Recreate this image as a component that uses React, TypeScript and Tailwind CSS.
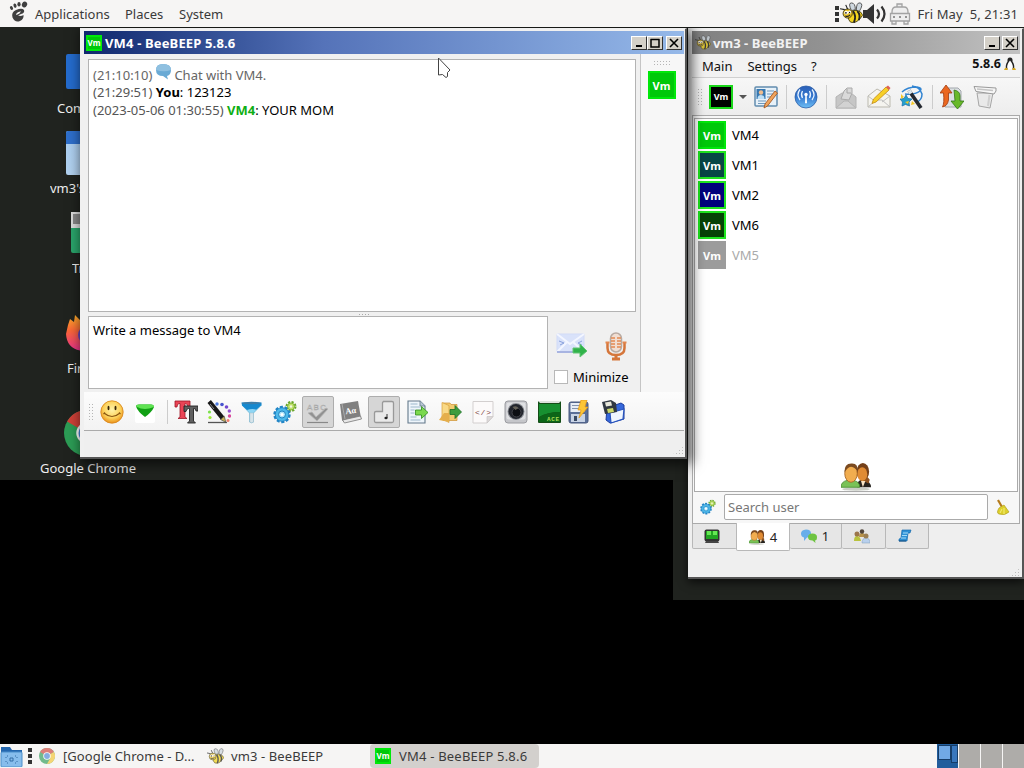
import type { ReactNode } from "react"
import { clsx } from "clsx"

function Svg({ size = 24, children, className }: { size?: number; children: ReactNode; className?: string }) {
  return (
    <svg width={size} height={size} viewBox="0 0 24 24" fill="none" className={clsx("shrink-0", className)}>
      {children}
    </svg>
  )
}

/* ---------- shared icons ---------- */

function Bee({ size = 24, faded }: { size?: number; faded?: boolean }) {
  return (
    <Svg size={size} className={faded ? "opacity-75" : undefined}>
      <path d="M12 9Q8 1 12 1t4 7zM17 9q0-9 4-8t-1 9z" fill="#cfd8df" stroke="#444" strokeWidth=".9" />
      <path d="M11 10q6-3 11 1 3 3 0 5-5 7-11 5-5-5 0-11z" fill="#f4d51e" stroke="#3b3410" strokeWidth=".9" />
      <path d="M13.500 9.500q4 5 1 12M18 9.500q4 4 1.500 9.500" stroke="#222" strokeWidth="2" />
      <circle cx="8" cy="12" r="4.800" fill="#e9c224" stroke="#3b3410" strokeWidth=".9" />
      <circle cx="6.500" cy="11" r="2" fill="#fff" />
      <circle cx="10" cy="10.500" r="1.600" fill="#fff" />
      <circle cx="6.200" cy="11.300" r=".9" fill="#111" />
      <circle cx="10" cy="11" r=".7" fill="#111" />
      <path d="M5 8L0 7M8 7.500L6 3M5.500 14.500q3 1.500 5-1" stroke="#222" strokeWidth="1.200" />
    </Svg>
  )
}

function Gears({ size = 24 }: { size?: number }) {
  return (
    <Svg size={size}>
      <circle cx="18" cy="6.500" r="4.200" stroke="#6aa62c" strokeWidth="2.600" strokeDasharray="2 1.300" />
      <circle cx="18" cy="6.500" r="3.500" fill="#c0df6e" stroke="#83b834" />
      <circle cx="18" cy="6.500" r="1.200" fill="#f4f8e6" />
      <circle cx="9" cy="14.500" r="7.500" stroke="#2285c6" strokeWidth="2.400" strokeDasharray="3 1.712" />
      <circle cx="9" cy="14.500" r="6.800" fill="#4cb9ea" stroke="#2285c6" />
      <circle cx="9" cy="14.500" r="3.500" fill="#a9e1f8" stroke="#2285c2" />
      <circle cx="9" cy="14.500" r="1.600" fill="#fff" />
    </Svg>
  )
}

function People({ size = 24 }: { size?: number }) {
  return (
    <Svg size={size}>
      <ellipse cx="12" cy="22.500" rx="11" ry="1.300" fill="#c9cdc5" />
      <path d="M13 20q0-5 4.500-5.500Q24 16 24 21H13z" fill="#26231e" />
      <ellipse cx="17.500" cy="8.500" rx="5" ry="7" fill="#744019" />
      <path d="M18 9l5 6-1 3-4-2z" fill="#8d521f" />
      <ellipse cx="17" cy="10.500" rx="4" ry="5.500" fill="#e08b33" />
      <path d="M16 16l1.500 5 2-5z" fill="#fae5c5" />
      <path d="M0 21q0-4.500 5-5.500h5q5 1 5 5.500z" fill="#79c257" stroke="#468b2f" strokeWidth=".7" />
      <ellipse cx="8" cy="10" rx="5" ry="7" fill="#f1ad4f" stroke="#a56322" strokeWidth=".7" />
      <path d="M2.800 9Q2.500 1.500 9 2q5 0 4 6-1.500-3-5-3.500-3 .5-5.200 4.500z" fill="#7b4a20" />
    </Svg>
  )
}

function Chrome({ size = 24 }: { size?: number }) {
  return (
    <Svg size={size}>
      <circle cx="12" cy="12" r="12" fill="#2c9c55" />
      <path d="M12 12L1.600 6A12 12 0 0122.400 6z" fill="#cf4038" />
      <path d="M12 12L22.400 6A12 12 0 0112 24l5-9z" fill="#f5c431" />
      <circle cx="12" cy="12" r="5.600" fill="#fff" />
      <circle cx="12" cy="12" r="4.400" fill="#4a86d8" />
    </Svg>
  )
}

function Avatar({ className }: { className: string }) {
  return (
    <span className={clsx("flex shrink-0 items-center justify-center border-2 font-bold leading-none text-white", className)}>
      Vm
    </span>
  )
}

/* ---------- toolbar icons ---------- */

const Smiley = () => (
  <Svg>
    <defs>
      <radialGradient id="smile" cx=".5" cy=".4" r=".62">
        <stop offset="0" stopColor="#fff3ab" />
        <stop offset=".6" stopColor="#fdd35c" />
        <stop offset="1" stopColor="#e88a13" />
      </radialGradient>
    </defs>
    <circle cx="12" cy="12" r="11.200" fill="url(#smile)" stroke="#d8861b" strokeWidth=".8" />
    <ellipse cx="8.500" cy="8" rx="1" ry="2.200" fill="#3a2505" />
    <ellipse cx="15.500" cy="8" rx="1" ry="2.200" fill="#3a2505" />
    <path d="M4 13q8 7 16 0M3.500 14l1.500-1.500M20.500 14L19 12.500" stroke="#8a5510" strokeWidth="1.100" />
  </Svg>
)

const GreenGem = () => (
  <Svg>
    <rect x="2" y="9" width="20" height="14" rx="2" fill="#fff" />
    <path d="M3 6.500Q3 4.500 6 4.500h12q3 0 3 2.500-2 5-9 10Q5 12 3 6.500z" fill="#11a014" />
    <path d="M3 6.500Q3 4.500 6 4.500h12q3 0 3 2.500-5 2-9 2T3 6.500z" fill="#5fe352" />
  </Svg>
)

const FontIcon = () => (
  <Svg>
    <path d="M1 1h15v6h-2q0-3-2.500-3.500H11V17l2 1.500H4L6 17V3.500H5Q3 4 3 7H1z" fill="#ea4455" stroke="#a01827" strokeWidth=".8" />
    <path d="M10 6h14v5h-2q0-2.500-2-2.500h-.5V21l2 2h-8l2-2V8.500h-1q-2 0-2.500 3h-2z" fill="#606060" stroke="#222" strokeWidth=".9" />
  </Svg>
)

const ColorWand = () => (
  <Svg>
    <circle cx="2.500" cy="12" r="1.600" fill="#7be04a" />
    <circle cx="3" cy="17.500" r="1.600" fill="#9be838" />
    <circle cx="10" cy="4" r="1.700" fill="#4d79dc" />
    <circle cx="15" cy="4.500" r="1.800" fill="#4854cf" />
    <circle cx="19.500" cy="7" r="1.800" fill="#7447cf" />
    <circle cx="22.300" cy="11" r="1.700" fill="#974ecf" />
    <circle cx="22.500" cy="16" r="1.700" fill="#d94b9c" />
    <circle cx="21" cy="20.500" r="1.500" fill="#ee806c" />
    <path d="M1 22.500h19" stroke="#555" strokeWidth="1.300" />
    <path d="M2.200 1.500L15.500 18" stroke="#171717" strokeWidth="4.400" />
    <path d="M13.500 19.500l3.800-3.200 1.500 6z" fill="#c7b457" stroke="#333" strokeWidth=".6" />
    <path d="M3 4l4 5" stroke="#8a8a8a" strokeWidth="1" />
  </Svg>
)

const Funnel = () => (
  <Svg>
    <path d="M2 5l7.500 8v9q2.500 1.500 4 0v-9l8-8z" fill="#8ed6f5" stroke="#4ea7cf" strokeWidth=".6" />
    <path d="M9.800 13h3.700v9q-2 1.500-3.700 0z" fill="#d6e4ea" stroke="#a8bcc6" strokeWidth=".5" />
    <path d="M1.500 2.500h20V5l-5 4.500q-5-1-9.500.5L2 5.500z" fill="#1689cf" />
    <ellipse cx="11.500" cy="3" rx="10" ry="1.200" fill="#3e7da8" />
  </Svg>
)

const Spell = () => (
  <Svg>
    <text x="1" y="9.500" fontSize="8" fontFamily="Liberation Sans, sans-serif" fill="#d3d3d3" stroke="#a5a5a5" strokeWidth=".4" textLength="19">ABC</text>
    <path d="M2 13l4-1 4 5 10-9 2 1-11 12z" fill="#919191" stroke="#b8b8b8" strokeWidth=".8" />
    <path d="M1 22.500h21" stroke="#888" strokeWidth="1.200" />
  </Svg>
)

const Dictionary = () => (
  <Svg>
    <path d="M1 4l18-3 3 17-17 4-2-2z" fill="#808080" />
    <path d="M3.500 20l18-4 1 3-17 4z" fill="#e7e7e7" stroke="#777" strokeWidth=".8" />
    <path d="M3 4l3 15" stroke="#aaa" />
    <text x="6.500" y="13.500" fontSize="8.500" fontWeight="bold" fontFamily="Liberation Serif, serif" fill="#fff" transform="rotate(-8 12 12)">Aα</text>
  </Svg>
)

const Note = () => (
  <Svg>
    <path d="M11 1.500h9q1.500 0 1.500 1.500v18q0 1.500-1.500 1.500H4Q2.500 22.500 2.500 21v-8q0-1.500 1.500-1.500h6.500V3q0-1.500 1.500-1.500z" fill="#e9e9e9" stroke="#999" strokeWidth="1.300" />
    <path d="M15 14v4" stroke="#333" strokeWidth="1" />
    <ellipse cx="14" cy="18" rx="1.600" ry="1.200" fill="#222" />
  </Svg>
)

const SendFile = () => (
  <Svg>
    <path d="M3 1h12l5 5v17H3z" fill="#eef5fb" stroke="#64798b" strokeWidth="1.100" />
    <path d="M15 1v5h5" fill="#b9c9d5" stroke="#64798b" strokeWidth=".8" />
    <path d="M5.500 4h7M5.500 7h10M5.500 10h4M5.500 13h4M5.500 17h6M5.500 20h10" stroke="#9db8cc" />
    <path d="M10.500 10h6V6.500l6.500 6-6.500 6V15h-6z" fill="#7bd94f" stroke="#2f8b1c" strokeWidth=".8" />
  </Svg>
)

const SendFolder = () => (
  <Svg>
    <path d="M5 3h7l1 1.500h6v16H5z" fill="#f3cb70" stroke="#cd9132" strokeWidth=".7" />
    <path d="M4 2.500l7 3v17L4 19z" fill="#f9d986" stroke="#d79d3b" strokeWidth=".7" />
    <path d="M1 20l5-7h5v9z" fill="#e5ae4b" />
    <path d="M12 9.500h5V5.500l6.500 6.500-6.500 6.500v-4h-5z" fill="#3d9d3e" stroke="#1b6f27" strokeWidth=".8" />
  </Svg>
)

const CodeFile = () => (
  <Svg>
    <path d="M2 1.500h20v15l-6 6.500H2z" fill="#fcfafa" stroke="#d3cfcf" />
    <path d="M22 16.500h-6V23z" fill="#dedada" stroke="#c8c4c4" strokeWidth=".7" />
    <text x="4" y="14.500" fontSize="8" fontFamily="Liberation Mono, monospace" fill="#814545" textLength="16">{"</>"}</text>
  </Svg>
)

const Camera = () => (
  <Svg>
    <rect x="1" y="1" width="22" height="22" rx="3" fill="#c5c6ca" stroke="#9b9ca1" />
    <rect x="2.500" y="2.500" width="19" height="17" rx="2" fill="#dfe0e3" />
    <circle cx="12" cy="11.500" r="8.500" fill="#8b8e94" />
    <circle cx="12" cy="11.500" r="7.500" fill="#22252d" />
    <circle cx="12.500" cy="12.500" r="4.500" fill="#0c0e13" stroke="#42434a" />
    <path d="M8.500 7q4-2 6 1l-3 2z" fill="#66635a" />
  </Svg>
)

const Screen = () => (
  <Svg>
    <rect x="1" y="1" width="23" height="22" rx="1" fill="#144d17" />
    <path d="M2 4h21v8Q11 12 2 17z" fill="#179030" />
    <path d="M2 17q9-5 21-5v10H2z" fill="#0c6518" />
    <path d="M1 1h23L22 3H3z" fill="#dce2dc" />
    <text x="10" y="20.500" fontSize="6" fontWeight="bold" fontFamily="Liberation Mono, monospace" fill="#abdd55" textLength="12">ACE</text>
  </Svg>
)

const FlashSave = () => (
  <Svg>
    <rect x="2" y="2" width="19" height="21" rx="2" fill="#5b6f98" stroke="#48587d" />
    <rect x="3.500" y="3" width="14" height="9" fill="#e8edf5" />
    <rect x="4" y="14" width="14" height="8" fill="#c8d3e5" />
    <path d="M5 5.500h9M5 8.500h9" stroke="#8493ad" />
    <rect x="7" y="16" width="3" height="5" fill="#394963" />
    <path d="M14 0h6l-2 7h3L12 18l2-8h-3z" fill="#fcc535" stroke="#e59614" strokeWidth=".7" />
  </Svg>
)

const SaveAs = () => (
  <Svg>
    <path d="M6 8l14-5 3 2v14L9 23l-4-3z" fill="#3567db" stroke="#1c3c9c" />
    <path d="M9 13l14-4-1 10-12 4z" fill="#eff6ff" stroke="#2753bd" strokeWidth="1.200" />
    <path d="M1 2l9-2 5 3 1 9-12 2z" fill="#303842" />
    <path d="M4 2.500l6-1 1 4-6 1z" fill="#e8e8dc" />
    <path d="M6 9l6-1 1 4-6 1z" fill="#cbd86b" />
  </Svg>
)

const Profile = () => (
  <Svg>
    <rect x="1" y="2" width="22" height="19" rx="1" fill="#e7f1f9" stroke="#618cae" strokeWidth="1.500" />
    <rect x="2.500" y="4" width="9" height="10" fill="#3678b2" />
    <circle cx="7" cy="7.500" r="2.200" fill="#f0bd8e" />
    <path d="M3.500 14q0-4 3.500-4t3.500 4z" fill="#bfe0f6" />
    <path d="M13 6h7M13 9h7M13 12h5M4 16h8M4 18.500h8" stroke="#6f98bb" strokeWidth="1.200" />
    <path d="M21 6l2.500 2-10 13-3.500 2 1-4z" fill="#f0a45c" stroke="#9d4e18" strokeWidth=".8" />
  </Svg>
)

const Broadcast = () => (
  <Svg>
    <defs>
      <linearGradient id="cast" x1="0" y1="0" x2="0" y2="1">
        <stop offset="0" stopColor="#2b60b8" />
        <stop offset=".5" stopColor="#3577cf" />
        <stop offset="1" stopColor="#6fc0f5" />
      </linearGradient>
    </defs>
    <circle cx="12" cy="12" r="11" fill="url(#cast)" stroke="#2c60a8" strokeWidth=".8" />
    <circle cx="12" cy="9.500" r="1.700" fill="#fff" />
    <path d="M12 11l-.5 7h1z" fill="#fff" stroke="#fff" />
    <path d="M8.500 13q-2-3.500 0-7M15.500 13q2-3.500 0-7M6 15Q2 9.500 6 4.500M18 15q4-5.500 0-10.500" stroke="#e5f2ff" strokeWidth="1.300" />
  </Svg>
)

const Unread = () => (
  <Svg>
    <path d="M2 12l6-4h9l5 4v11H2z" fill="#c6c6c6" stroke="#b4b4b4" />
    <path d="M2 23l8-7h4l8 7z" fill="#d2d2d2" stroke="#b4b4b4" />
    <path d="M7 14l3-8 3-3h5v5l-3 7z" fill="#d9d9d9" stroke="#aaa" />
    <path d="M13 4v4h4" stroke="#a6a6a6" />
  </Svg>
)

const Compose = () => (
  <Svg>
    <path d="M1 11L10 4l13 7v11H1z" fill="#f5f4ef" stroke="#bbb9ae" />
    <path d="M1 22l8-7h6l8 7M1 11l8 6M23 11l-8 6" stroke="#c0c0c0" />
    <path d="M19 2l3 3L9 17l-4 1.500L6.500 14z" fill="#f6cf28" stroke="#c58c11" strokeWidth=".8" />
    <path d="M19 2l2-1.500L23.500 3 22 5z" fill="#de6157" />
  </Svg>
)

const Magic = () => (
  <Svg>
    <path d="M2 7q5-5 15-5 6 1 3 4-5 4-15 3M12 1q8 1 10 8 0 6-5 8" stroke="#3285d2" strokeWidth="1.500" />
    <path d="M6 10l2 3.500 4 .5-3 3 .500 4-4-1.500L2 21l.5-4L0 14l4-.5z" fill="#249fcd" stroke="#186faa" strokeWidth=".7" />
    <path d="M1 9l3 3-3 2zM5 17l4-1-1 3zM12 16l3 3-4 1z" fill="#f5c826" />
    <path d="M9 5.500L21 23" stroke="#24282f" strokeWidth="3.600" />
    <path d="M9 5.500l2 3" stroke="#dce7ef" strokeWidth="3.600" />
  </Svg>
)

const Transfer = () => (
  <Svg>
    <path d="M5 3h13l3 3v16H5z" fill="#dde0e4" stroke="#a2a7ac" />
    <path d="M6 0l6 8H8.500v7q-1 6-6 7 2-4 1-14H0z" fill="#ea6720" stroke="#9f3a10" strokeWidth=".8" />
    <path d="M14 5q6 1 6 6v5h4l-6.500 8L11 16h4z" fill="#68b929" stroke="#347717" strokeWidth=".8" />
  </Svg>
)

const Trash = () => (
  <Svg>
    <path d="M4 8h16l-3 15-11-2z" fill="#e9e9e9" stroke="#a6a6a6" />
    <path d="M1 1.500L23 3v3l-2 3L3 6.500z" fill="#f6f6f6" stroke="#999" />
    <path d="M4 4l16 1.500" stroke="#c4c4c4" strokeWidth="1.500" />
    <path d="M16.500 10l-1.500 11" stroke="#cfcfcf" strokeWidth="2" />
  </Svg>
)

const chatTools = [
  { icon: FontIcon },
  { icon: ColorWand },
  { icon: Funnel },
  { icon: Gears },
  { icon: Spell, pressed: true },
  { icon: Dictionary },
  { icon: Note, pressed: true },
  { icon: SendFile },
  { icon: SendFolder },
  { icon: CodeFile },
  { icon: Camera },
  { icon: Screen },
]

const users = [
  { name: "VM4", color: "border-[#00e80a] bg-[#00c80a]" },
  { name: "VM1", color: "border-[#1fe41f] bg-[#084646]" },
  { name: "VM2", color: "border-[#1fe41f] bg-[#00007c]" },
  { name: "VM6", color: "border-[#1fe41f] bg-[#064206]" },
  { name: "VM5", color: "border-[#9c9c9c] bg-[#9c9c9c]", offline: true },
]

function Grip({ horizontal }: { horizontal?: boolean }) {
  return (
    <span
      className={clsx(
        "shrink-0 bg-[radial-gradient(circle,#b5b5b5_0.7px,transparent_1px)] bg-[length:3px_3px]",
        horizontal ? "h-1.5 w-[18px]" : "h-[18px] w-1.5",
      )}
    />
  )
}

function WinButton({ kind }: { kind: "min" | "max" | "close" }) {
  return (
    <span className="flex h-[14px] w-4 items-center justify-center border border-t-white border-r-[#333] border-b-[#333] border-l-white bg-[#d4d0c8]">
      <svg width="12" height="10" viewBox="0 0 12 10" fill="none" stroke="#000">
        {kind === "min" && <path d="M3 8h6" strokeWidth="2" />}
        {kind === "max" && <path d="M2 1v8h8V1M1.500 1.500h9" strokeWidth="1.500" />}
        {kind === "close" && <path d="M2 1l8 8M10 1L2 9" strokeWidth="1.600" />}
      </svg>
    </span>
  )
}

function TopPanel() {
  return (
    <header className="relative z-30 flex h-[27px] shrink-0 items-center bg-[#f6f5f4] pr-[6px] pl-[9px] text-[#3a3a3a]">
      <svg width="20" height="22" viewBox="0 0 20 22" fill="#3f3f3f" className="-mt-1">
        <ellipse cx="2.500" cy="7" rx="1.400" ry="2" transform="rotate(-30 2.500 7)" />
        <ellipse cx="6" cy="4.700" rx="1.500" ry="2.200" transform="rotate(-15 6 4.700)" />
        <ellipse cx="10" cy="3.300" rx="1.600" ry="2.300" />
        <ellipse cx="15.500" cy="3.500" rx="2.600" ry="3" transform="rotate(25 15.500 3.500)" />
        <path d="M7 9q6-2.500 8 0 1 3-3 4l-3 1.500q3 1 5.500-.5.500 4-3.500 6-5 2-7.500-3.500Q2 11 7 9z" />
        <path d="M7 13q2-3 5-2.500-1 2-4.500 3.500z" fill="#f6f5f4" />
      </svg>
      <nav className="ml-[6px] flex">
        <span className="w-[90px]">Applications</span>
        <span className="w-[54px]">Places</span>
        <span>System</span>
      </nav>
      <div className="ml-auto flex items-center">
        <svg width="6" height="18" viewBox="0 0 6 18" fill="#333">
          <path d="M1 1h4v4H1zM1 7h4v4H1zM1 13h4v4H1z" />
        </svg>
        <Bee size={23} />
        <svg width="25" height="22" viewBox="0 0 25 22" fill="none" stroke="#333" strokeWidth="2.200">
          <path d="M0 7h4l7-6v20l-7-6H0z" fill="#333" stroke="none" />
          <path d="M14 6.500q4 4.500 0 9M18.500 3.500q6 7.500 0 15" />
        </svg>
        <svg width="22" height="22" viewBox="0 0 22 22" fill="#eee" stroke="#a3a3a3" strokeWidth="1.300" className="ml-px">
          <path d="M8 1h5v3H8zM3 9q0-5 4-5h8q4 0 4 5v3H3z" />
          <path d="M1.500 10.500h19V18h-19zM3 18v3h4v-3M15 18v3h4v-3" />
          <path d="M4 14h2M10 14h2M16 14h2" stroke="#777" />
        </svg>
        <span className="ml-[6px] tracking-[0.1px] whitespace-pre">Fri May  5, 21:31</span>
      </div>
    </header>
  )
}

function DesktopIcons() {
  return (
    <>
      {/* only the part left of the chat window stays uncovered */}
      <div className="absolute top-0 left-0 h-[430px] w-20 overflow-hidden">
        <div className="absolute top-[27px] left-[66px] h-[35px] w-[44px] rounded-xs bg-[#246bcc]" />
        <span className="absolute top-[72px] left-[57px] w-[23px] overflow-hidden text-[#eee]">Computer</span>
        <div className="absolute top-[104px] left-[66px] h-[44px] w-[44px] rounded-xs bg-gradient-to-br from-[#a9cdf0] to-[#b8d4ee]">
          <div className="h-[13px] rounded-t-xs bg-[#2e6fcb]" />
        </div>
        <span className="absolute top-[152px] left-[50px] w-[30px] overflow-hidden whitespace-nowrap text-[#eee]">vm3's Home</span>
        <div className="absolute top-[185px] left-[71px] h-[41px] w-[34px] rounded-xs bg-[#2aa56b]">
          <div className="h-[16px] border-2 border-b-4 border-[#ddd] bg-[#888]" />
        </div>
        <span className="absolute top-[232px] left-[72px] w-2 overflow-hidden text-[#eee]">Trash</span>
        <svg width="42" height="44" viewBox="0 0 42 44" className="absolute top-[284px] left-[65px]">
          <defs>
            <linearGradient id="fox" x1="0" y1="0" x2="0" y2="1">
              <stop offset="0" stopColor="#ffb327" />
              <stop offset=".45" stopColor="#fb6637" />
              <stop offset="1" stopColor="#e9328e" />
            </linearGradient>
          </defs>
          <path d="M3 14l2-6 4 3 1-7 5 5 9-6q16 8 15 22-2 13-18 15Q2 40 1 23z" fill="url(#fox)" />
          <circle cx="22" cy="24" r="9" fill="#6646bd" />
        </svg>
        <span className="absolute top-[332px] left-[67px] w-[13px] overflow-hidden text-[#eee]">Firefox</span>
        <span className="absolute top-[383px] left-[64px]">
          <Chrome size={46} />
        </span>
      </div>
      <span className="absolute top-[432px] left-[40px] whitespace-nowrap text-[#eee]">Google Chrome</span>
    </>
  )
}

function ChatWindow() {
  return (
    <section className="absolute top-px left-[80px] z-20 flex h-[431px] w-[607px] flex-col border-t border-r-2 border-b-2 border-t-[#eee] border-r-[#555] border-b-[#555] bg-[#f0f0f0] pt-[2px] pr-px pl-[4px] shadow-[3px_3px_12px_2px_rgba(0,0,0,0.65)]">
      <div className="flex h-[23px] shrink-0 items-center bg-gradient-to-r from-[#10286e] via-[#5573b9] via-40% to-[#96b9e9] pr-[2px] pl-[2px]">
        <Avatar className="size-4 border-[#00e80a] bg-[#00c80a] text-[8px]" />
        <h1 className="ml-[3px] text-[13px] font-bold tracking-[0.15px] text-white">VM4 - BeeBEEP 5.8.6</h1>
        <div className="ml-auto flex">
          <WinButton kind="min" />
          <WinButton kind="max" />
          <span className="w-[3px]" />
          <WinButton kind="close" />
        </div>
      </div>

      <div className="flex h-[338px] shrink-0">
        <div className="flex w-[556px] flex-col pt-[5px] pl-[4px]">
          <div className="h-[253px] w-[548px] border border-[#b3b3b3] bg-white pt-[6px] pl-1 leading-[17.5px] text-black">
            <p className="flex h-[18px] items-center pt-px text-[#666]">
              (21:10:10)
              <svg width="17" height="17" viewBox="0 0 17 17" className="-mt-2 mr-[2px] ml-[3px]">
                <path d="M8 1q8 0 8 6 0 5-4 6l1 3.500L8 13Q1 13 1 7t7-6z" fill="#69aad5" />
                <path d="M8 1q8 0 8 6-7 2.500-15 0 0-6 7-6z" fill="#8fc0e0" />
              </svg>
              Chat with VM4.
            </p>
            <p>
              <span className="text-[#555]">(21:29:51)</span> <b>You</b>: 123123
            </p>
            <p>
              <span className="text-[#555]">(2023-05-06 01:30:55)</span> <b className="text-[#0fae14]">VM4</b>: YOUR MOM
            </p>
          </div>
          <div className="flex h-[4px] items-center justify-center">
            <span className="h-[3px] w-3 bg-[radial-gradient(circle,#aaa_0.7px,transparent_1px)] bg-[length:3px_3px]" />
          </div>
          <div className="flex h-[73px]">
            <div className="w-[460px] border border-[#b3b3b3] bg-white pt-[4px] pl-1 text-black">Write a message to VM4</div>
            <div className="flex flex-1 flex-col pl-[5px]">
              <div className="flex h-[52px] items-end pb-[3px]">
                <svg width="36" height="36" viewBox="0 0 36 36" fill="none">
                  <path d="M4 5h27v18H4z" fill="#d9e2fa" stroke="#d2dbf7" />
                  <path d="M4 5l13 10L31 5M4 23l10-10M31 23L20 13" stroke="#f3f6ff" strokeWidth="2" />
                  <path d="M6 12l5 2-4 2M29 12l-4 2 4 2" stroke="#8ba2dd" />
                  <path d="M4 23h17" stroke="#a8b4e1" strokeWidth="2" />
                  <path d="M20 19h7v-4l7 7-7 6v-4h-7z" fill="#31b34a" stroke="#63c574" />
                </svg>
                <svg width="28" height="36" viewBox="0 0 28 36" fill="none" className="mt-px ml-[13px]">
                  <rect x="8.500" y="4" width="11" height="19" rx="5.500" fill="#f1ded2" stroke="#b9aaa1" strokeWidth="1.500" />
                  <path d="M9 9h4M15 9h4M9 12h4M15 12h4M9 15h4M15 15h4M9 18h4M15 18h4" stroke="#e38952" strokeWidth="1.500" />
                  <path d="M5.500 13v6q0 7 8.500 7t8.500-7v-6" stroke="#d5763b" strokeWidth="2.500" />
                  <path d="M14 25v5M10 30h8" stroke="#d5763b" strokeWidth="3" />
                  <path d="M3.500 13.500h4M20.500 13.500h4" stroke="#e4874e" strokeWidth="2" />
                </svg>
              </div>
              <label className="flex items-center gap-[5px] pl-px text-black">
                <span className="size-[14px] border border-[#b8b8b8] bg-white" />
                Minimize
              </label>
            </div>
          </div>
        </div>
        <aside className="flex flex-1 flex-col items-center gap-[5px] border-l border-[#c5c5c5] bg-[#f7f7f7] pt-[6px] pr-[2px]">
          <Grip horizontal />
          <Avatar className="size-7 border-[#00e80a] bg-[#00c80a] text-[11px]" />
        </aside>
      </div>

      <div className="flex h-[39px] shrink-0 items-center border-b border-[#aaa] bg-gradient-to-b from-[#fcfcfc] to-[#f3f3f3] pt-px pl-[4px]">
        <Grip />
        <span className="ml-px flex w-[33px] justify-center">
          <Smiley />
        </span>
        <span className="flex w-[33px] justify-center">
          <GreenGem />
        </span>
        <span className="mr-px ml-[6px] h-6 w-px bg-[#ccc]" />
        {chatTools.map(({ icon: Icon, pressed }, index) => (
          <span key={index} className="flex w-[33px] justify-center">
            <span
              className={clsx(
                "flex size-8 items-center justify-center rounded-xs border",
                pressed ? "border-[#adadad] bg-[#d6d6d6]" : "border-transparent",
              )}
            >
              <Icon />
            </span>
          </span>
        ))}
        <span className="ml-[2px] flex gap-[10px]">
          <FlashSave />
          <SaveAs />
        </span>
      </div>
      <div className="flex flex-1 items-end justify-end bg-[#efefef] pb-0.5">
        <span className="h-[9px] w-3 bg-[radial-gradient(circle,#bbb_0.7px,transparent_1px)] bg-[length:3px_3px] [clip-path:polygon(100%_0,100%_100%,0_100%)]" />
      </div>
    </section>
  )
}

function UserList() {
  return (
    <div className="relative h-[374px] border border-[#aaa] bg-white pt-px pl-[3px]">
      {users.map((user) => (
        <div key={user.name} className="flex h-[30px] items-center gap-[6px]">
          <Avatar className={clsx("size-7 text-[11px]", user.color)} />
          <span className={user.offline ? "text-[#aaa]" : "text-black"}>{user.name}</span>
        </div>
      ))}
      <span className="absolute bottom-0 left-[146px]">
        <People size={30} />
      </span>
    </div>
  )
}

function Tabs() {
  return (
    <div className="flex h-[28px] items-start text-[#222]">
      <span className="flex h-[25px] w-[45px] items-center justify-center rounded-b-xs border border-t-0 border-[#b8b8b8] bg-[#e6e6e6] pr-[6px]">
        <svg width="16" height="15" viewBox="0 0 16 15">
          <rect x=".5" y=".5" width="15" height="12" rx="2" fill="#333" />
          <path d="M2 12h12l1 2H1z" fill="#444" />
          <rect x="2" y="2" width="12" height="8" fill="#22a522" />
          <path d="M3 2h4v4H3zM9 2h4v4H9z" fill="#66e854" />
        </svg>
      </span>
      <span className="z-10 -mt-px -ml-px flex h-[28px] w-[54px] items-center justify-center gap-[5px] rounded-b-xs border border-t-0 border-[#b8b8b8] bg-white pt-px">
        <People size={16} />4
      </span>
      <span className="flex h-[25px] w-[52px] items-center justify-center gap-[5px] rounded-b-xs border border-t-0 border-l-0 border-[#b8b8b8] bg-[#e6e6e6] pr-px">
        <svg width="16" height="14" viewBox="0 0 16 14">
          <path d="M5 .5q5 0 5 4T6 8.500L3 12V8.500Q0 8 0 4.500t5-4z" fill="#68aee9" />
          <path d="M11.500 4.500q4.500 0 4.500 3.500t-2 3.500l.5 2.500-3-2.500Q7 11.500 7 8t4.500-3.500z" fill="#6fc442" />
        </svg>
        1
      </span>
      <span className="flex h-[25px] w-[44px] items-center justify-center rounded-b-xs border border-t-0 border-l-0 border-[#b8b8b8] bg-[#e6e6e6] pr-1">
        <svg width="17" height="15" viewBox="0 0 17 15">
          <path d="M1 12q0-5 3-5t4 5z" fill="#b9c33e" />
          <path d="M6 8q0-4 3-4t4 4z" fill="#b8934a" />
          <path d="M9 14q0-5 4-5t4 5z" fill="#b8d0ed" stroke="#7e9cbb" strokeWidth=".5" />
          <circle cx="4" cy="5" r="2.500" fill="#9b764c" />
          <circle cx="9" cy="2.500" r="2.200" fill="#51453a" />
          <circle cx="13" cy="7" r="2.500" fill="#9b8055" />
        </svg>
      </span>
      <span className="flex h-[25px] w-[43px] items-center justify-center rounded-b-xs border border-t-0 border-l-0 border-[#b8b8b8] bg-[#e6e6e6] pr-1">
        <svg width="14" height="15" viewBox="0 0 14 15">
          <path d="M4 1h9l-1 3h-2L9 12H1q-1-2 2-3z" fill="#2e91d6" stroke="#196aac" strokeWidth=".7" />
          <path d="M5 4h5M4 6.500h5M3 9h5" stroke="#a4dcf8" />
          <path d="M1 12h7" stroke="#174f7e" />
        </svg>
      </span>
    </div>
  )
}

function MainWindow() {
  return (
    <section className="absolute top-px left-[688px] z-10 flex h-[551px] w-[336px] flex-col border-t border-r-2 border-b-2 border-t-[#eee] border-r-[#555] border-b-[#555] bg-[#efefef] pt-[2px] pr-[2px] pl-[4px] shadow-[0_3px_9px_rgba(0,0,0,0.7)]">
      <div className="flex h-[23px] shrink-0 items-center bg-gradient-to-r from-[#808080] via-[#929292] via-40% to-[#c2c2c2] pr-[2px] pl-[3px]">
        <Bee size={16} faded />
        <h1 className="ml-[2px] text-[13px] font-bold tracking-[0.05px] text-[#f2f2f2]">vm3 - BeeBEEP</h1>
        <div className="ml-auto flex gap-[2px]">
          <WinButton kind="min" />
          <WinButton kind="close" />
        </div>
      </div>
      <div className="flex h-[24px] shrink-0 items-center border-b border-[#d0d0d0] bg-[#f2f2f2] pr-[4px] pl-[10px] text-[#111]">
        <span>Main</span>
        <span className="ml-[15px]">Settings</span>
        <span className="ml-[14px]">?</span>
        <b className="ml-auto pb-[3px] text-[12.500px] tracking-[0.05px]">5.8.6</b>
        <svg width="12" height="14" viewBox="0 0 12 14" className="mb-1 ml-[3px]">
          <path d="M6 .5q3 0 2.500 4Q11 8 10 12H2Q1 8 3.500 4.500 3 .5 6 .5z" fill="#222" />
          <path d="M6 3.500q4 5 2.500 8.500h-5Q2 8.500 6 3.500z" fill="#fff" />
          <path d="M0 13q1-3 3-2l1 2zM12 13q-1-3-3-2l-1 2z" fill="#d7a71e" />
        </svg>
      </div>
      <div className="flex h-[37px] shrink-0 items-center bg-gradient-to-b from-[#f7f7f7] to-[#ededed] pl-[5px]">
        <Grip />
        <Avatar className="ml-[6px] size-6 border-[#19d619] bg-black text-[9px]" />
        <span className="ml-[6px] border-x-[4px] border-t-[4px] border-x-transparent border-t-[#555]" />
        <span className="ml-[7px]"><Profile /></span>
        <span className="ml-2 h-6 w-px bg-[#ccc]" />
        <span className="ml-[7px]"><Broadcast /></span>
        <span className="ml-2 h-6 w-px bg-[#ccc]" />
        <span className="ml-[7px] flex gap-[9px]">
          <Unread />
          <Compose />
          <Magic />
        </span>
        <span className="ml-2 h-6 w-px bg-[#ccc]" />
        <span className="ml-[7px] flex gap-[9px]">
          <Transfer />
          <Trash />
        </span>
      </div>

      <div className="h-[409px] shrink-0 border border-[#aaa] bg-[#f7f7f7] px-px pt-[2px]">
        <UserList />
        <div className="flex h-[30px] items-center pl-[6px]">
          <Gears size={16} />
          <div className="ml-[8px] flex h-[26px] w-[264px] items-center rounded-xs border border-[#aaa] bg-white pl-[3px] text-[#777]">Search user</div>
          <svg width="16" height="17" viewBox="0 0 16 17" className="ml-[7px]">
            <path d="M3 1l4 7" stroke="#b47a1c" strokeWidth="2.200" />
            <path d="M4 9l5-3 5 7q-4 4-10 2-3-1 0-6z" fill="#ddd02c" stroke="#b3a021" strokeWidth=".7" />
            <path d="M5 14l2-4M9 15V9" stroke="#f4ee7c" />
          </svg>
        </div>
      </div>
      <Tabs />
      <div className="flex flex-1 items-end justify-end">
        <span className="h-[9px] w-3 bg-[radial-gradient(circle,#bbb_0.7px,transparent_1px)] bg-[length:3px_3px] [clip-path:polygon(100%_0,100%_100%,0_100%)]" />
      </div>
    </section>
  )
}

function Taskbar() {
  return (
    <footer className="relative z-30 flex h-6 shrink-0 items-center bg-[#f6f5f4] text-[#3a3a3a]">
      <svg width="23" height="22" viewBox="0 0 23 22">
        <path d="M1 2h9l2 3h10v8H1z" fill="#2467ae" />
        <rect x="1" y="7" width="21" height="15" rx="1" fill="#87bdec" stroke="#4b8fca" />
        <path d="M6 12v1M6 16v1M17 12v1M17 16v1M7 11h1M15 11h1M7 18h1M15 18h1M10 13h3v3h-3z" fill="none" stroke="#326da5" />
      </svg>
      <svg width="6" height="18" viewBox="0 0 6 18" fill="#333" className="ml-1">
        <path d="M1 1h4v4H1zM1 7h4v4H1zM1 13h4v4H1z" />
      </svg>
      <span className="ml-[6px] flex w-[168px] items-center gap-[8px] tracking-[0.04px] whitespace-nowrap">
        <span className="opacity-65"><Chrome size={16} /></span>
        [Google Chrome - D...
      </span>
      <span className="flex w-[163px] items-center gap-[7px] tracking-[0.1px]">
        <Bee size={17} faded />
        vm3 - BeeBEEP
      </span>
      <span className="flex h-6 w-[169px] items-center gap-[8px] rounded-sm bg-[#d3d0cd] pl-[5px] tracking-[0.2px]">
        <Avatar className="size-4 border-[#00e80a] bg-[#00c80a] text-[8px] tracking-normal" />
        VM4 - BeeBEEP 5.8.6
      </span>
      <div className="ml-auto flex h-full gap-px">
        <div className="flex w-[21px] bg-[#215d9c] pt-px pl-px">
          <span className="h-[15px] w-[13px] border border-[#173e69] bg-[#71a9e5]" />
          <span className="h-[18px] w-[7px] border border-[#173e69] bg-[#3977bd]" />
        </div>
        <div className="w-[21px] bg-[#aeaca9]" />
        <div className="w-[21px] bg-[#aeaca9]" />
        <div className="w-[21px] bg-[#aeaca9]" />
      </div>
    </footer>
  )
}

export default function App() {
  return (
    <div className="relative flex h-[768px] w-[1024px] flex-col overflow-hidden bg-black font-['Noto_Sans',sans-serif] text-[13px] leading-[18px]">
      <TopPanel />
      <main className="relative flex-1 overflow-hidden">
        <div className="h-[453px] bg-[#20231f]" />
        <div className="ml-[673px] h-[120px] bg-[#20231f]" />
        <DesktopIcons />
        <MainWindow />
        <ChatWindow />
        <svg width="14" height="22" viewBox="0 0 14 22" className="absolute top-[30px] left-[437px] z-30">
          <path d="M1.500 1v17l4-.5 3.500 3 1.500-1v-4l2.500-2.500z" fill="#fff" stroke="#444" />
        </svg>
      </main>
      <Taskbar />
    </div>
  )
}
